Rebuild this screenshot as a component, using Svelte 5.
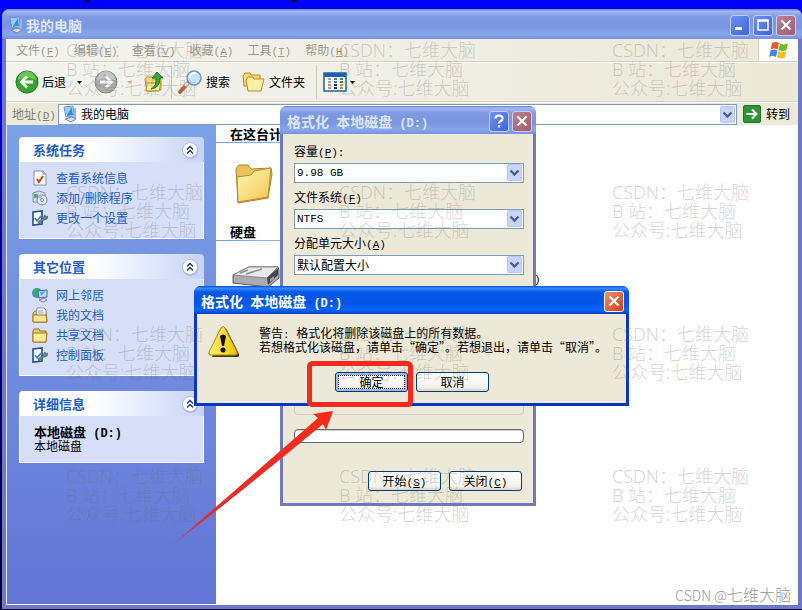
<script lang="ts">
	type Task = { icon: string; label: string };

	const menus = [
		['文件', 'F'],
		['编辑', 'E'],
		['查看', 'V'],
		['收藏', 'A'],
		['工具', 'T'],
		['帮助', 'H']
	];

	const panels: { title: string; tasks: Task[] }[] = [
		{
			title: '系统任务',
			tasks: [
				{ icon: 'check', label: '查看系统信息' },
				{ icon: 'programs', label: '添加/删除程序' },
				{ icon: 'settings', label: '更改一个设置' }
			]
		},
		{
			title: '其它位置',
			tasks: [
				{ icon: 'network', label: '网上邻居' },
				{ icon: 'documents', label: '我的文档' },
				{ icon: 'shared', label: '共享文档' },
				{ icon: 'settings', label: '控制面板' }
			]
		}
	];

	const fields = [
		{ id: 'capacity', label: '容量', key: 'P', colon: ':', value: '9.98 GB', latin: true },
		{ id: 'filesystem', label: '文件系统', key: 'F', colon: '', value: 'NTFS', latin: true },
		{ id: 'cluster', label: '分配单元大小', key: 'A', colon: '', value: '默认配置大小', latin: false }
	];

	const marks = Array.from({ length: 12 }, (_, i) => i);

	let address = $state('我的电脑');
</script>

{#snippet key(letter: string, after = '')}<span class="key">(<u>{letter}</u>){after}</span>{/snippet}

{#snippet computer()}
	<svg width="14" height="18" viewBox="0 0 14 18" aria-hidden="true">
		<path d="M1 2l9-1 1 10-8 1z" fill="#dfe9f7" stroke="#6f8fc0" />
		<path d="M2 3l7-1 1 8-6 1z" fill="#2d8fe8" />
		<path d="M2 3l7-1-5 8z" fill="#8fd4ff" />
		<path d="M11 3h2v11l-3 2z" fill="#9bb4da" />
		<path d="M2 14l7-2 4 2-5 3z" fill="#d5dbe8" stroke="#7a88a8" />
	</svg>
{/snippet}

{#snippet caret()}
	<svg class="caret" width="5" height="3" viewBox="0 0 5 3" aria-hidden="true"><path d="M0 0h5L2.500 3z" fill="currentColor" /></svg>
{/snippet}

{#snippet separator()}
	<span class="separator"></span>
{/snippet}

{#snippet closeGlyph()}
	<svg width="12" height="12" viewBox="0 0 12 12" aria-hidden="true"><path d="M1.500 1.500l9 9M10.500 1.500l-9 9" stroke="#fff" stroke-width="2.200" /></svg>
{/snippet}

{#snippet dropArrow()}
	<svg class="drop" width="15" height="17" viewBox="0 0 15 17" aria-hidden="true">
		<rect x=".5" y=".5" width="14" height="16" rx="1.500" fill="#c6d5fd" stroke="#b5c8f5" />
		<path d="M3.500 6.500l4 4 4-4" fill="none" stroke="#4d6185" stroke-width="2.400" />
	</svg>
{/snippet}

{#snippet folderIcon()}
	<path d="M1 5l2-3h5l1 2h9v11H2z" fill="#f7d774" stroke="#b98b23" />
	<path d="M4 9l2-3h5l1 2h10l-3 12H6z" fill="#ffefa3" stroke="#b98b23" />
{/snippet}

{#snippet taskIcon(name: string)}
	<svg width="16" height="16" viewBox="0 0 16 16" aria-hidden="true">
		{#if name === 'check'}
			<path d="M2 1h9l3 3v11H2z" fill="#fff" stroke="#7d8cae" />
			<path d="M11 1v3h3" fill="#cbd6ee" stroke="#7d8cae" />
			<path d="M5 9l2 3 4-6" fill="none" stroke="#d93b1a" stroke-width="2" />
		{:else if name === 'programs'}
			<path d="M1 3l6-2 6 2v9H1z" fill="#cfdcf2" stroke="#7f94bd" />
			<path d="M2 4h4v4H2z" fill="#58a95a" />
			<circle cx="10" cy="10" r="5" fill="#e4eaf5" stroke="#7387b0" />
			<path d="M10 10L6 7a5 5 0 0 1 4-2z" fill="#a3c1ee" />
			<circle cx="10" cy="10" r="1.500" fill="#fff" stroke="#7387b0" />
		{:else if name === 'settings'}
			<path d="M1 2l9-1v13l-9 1z" fill="#fff" stroke="#1d4f8f" stroke-width="1.600" />
			<path d="M3 8l2 3 4-5" fill="none" stroke="#2e78c8" stroke-width="1.600" />
			<path d="M6 12l5-4 2-3 1 2 2-1-1 3-3 1-5 4z" fill="#6c8195" stroke="#36485b" stroke-width=".6" />
		{:else if name === 'network'}
			<circle cx="5" cy="6" r="5" fill="#2e93d8" />
			<path d="M1 4l3-3 3 2-2 3-1 4-2-2z" fill="#38b34a" />
			<path d="M6 4l9-1v7l-8 1z" fill="#bfe0ff" stroke="#47699f" />
			<path d="M8 5l6-1-5 5z" fill="#54a7f0" />
			<path d="M7 13l5-2 3 2-4 2z" fill="#d5daf0" stroke="#66739b" stroke-width=".8" />
		{:else if name === 'documents'}
			<path d="M1 6l2-2h11l1 11H1z" fill="#f5cf63" stroke="#9b7424" />
			<path d="M5 1h7l2 2v8H4z" fill="#fff" stroke="#7b93bb" />
			<path d="M6 4h5M6 6h6" stroke="#76a3de" />
			<path d="M1 8h13l1 7H1z" fill="#ffe692" stroke="#9b7424" />
		{:else}
			<path d="M1 4l1-2h5l1 2h6v11H1z" fill="#f2ca5d" stroke="#9b7424" />
			<path d="M1 6h14l-1 9H1z" fill="#ffe99b" stroke="#9b7424" />
		{/if}
	</svg>
{/snippet}

{#snippet collapse(title: string)}
	<button class="collapse" aria-label={title}>
		<svg width="20" height="20" viewBox="0 0 20 20" aria-hidden="true">
			<circle cx="10.500" cy="11" r="8" fill="#8a9cc9" opacity=".5" />
			<circle cx="10" cy="10" r="7.500" fill="#fff" stroke="#b4bedb" />
			<path d="M7 9.500l3-3 3 3M7 13.500l3-3 3 3" fill="none" stroke="#1d3c70" stroke-width="1.500" />
		</svg>
	</button>
{/snippet}

<div class="desktop">
	<main class="window">
		<header class="titlebar">
			{@render computer()}
			<h1>我的电脑</h1>
			<button class="control" aria-label="最小化">
				<svg width="12" height="12" viewBox="0 0 12 12"><path d="M1 9.500h7" stroke="#fff" stroke-width="3" /></svg>
			</button>
			<button class="control" aria-label="最大化">
				<svg width="12" height="12" viewBox="0 0 12 12"><path d="M1 1h10v10H1zM1 2h10" fill="none" stroke="#fff" stroke-width="1.500" /></svg>
			</button>
			<button class="control close" aria-label="关闭">{@render closeGlyph()}</button>
		</header>

		<nav class="menubar">
			{#each menus as [label, letter]}
				<button>{label}{@render key(letter)}</button>
			{/each}
			<span class="flag">
				<svg width="22" height="19" viewBox="0 0 22 19" aria-hidden="true">
					<path d="M4 2q4-2 7 0L9.500 8.500q-4-2-7 0z" fill="#ea5b2b" />
					<path d="M12 2.500q4 2 8 0L18.500 9q-4 2-8 0z" fill="#75b52f" />
					<path d="M2.500 9.500q4-2 7 0L8 16q-4-2-7 0z" fill="#4a88dc" />
					<path d="M10.500 10q4 2 8 0L17 16.500q-4 2-8 0z" fill="#f5bd28" />
				</svg>
			</span>
		</nav>

		<div class="toolbar">
			<button class="tool">
				<svg width="24" height="24" viewBox="0 0 24 24" aria-hidden="true">
					<circle cx="12" cy="12" r="11" fill="#36a52b" stroke="#267b1f" />
					<path d="M3 10a9 9 0 0 1 18 0q-9-4-18 0z" fill="#8bdc72" opacity=".6" />
					<path d="M18 12H7M12 6.500L6.500 12l5.500 5.500" fill="none" stroke="#fff" stroke-width="2.800" />
				</svg>
				后退
				<span class="split">{@render caret()}</span>
			</button>
			<button class="tool forward" aria-label="前进">
				<svg width="24" height="24" viewBox="0 0 24 24" aria-hidden="true">
					<circle cx="12" cy="12" r="11" fill="#aaa" stroke="#8f8f8f" />
					<path d="M3 10a9 9 0 0 1 18 0q-9-4-18 0z" fill="#d8d8d8" opacity=".6" />
					<path d="M6 12h11M12 6.500l5.500 5.500-5.500 5.500" fill="none" stroke="#f4f4f4" stroke-width="2.800" />
				</svg>
				<span class="split">{@render caret()}</span>
			</button>
			<button class="tool" aria-label="向上">
				<svg width="22" height="22" viewBox="0 0 22 22" aria-hidden="true">
					<path d="M2 8l2-2h5l1 2h8v11L4 21z" fill="#f6d66d" stroke="#bb902d" />
					<path d="M4 12h14l-2 8H3z" fill="#ffefa5" stroke="#bb902d" />
					<path d="M8 18q6-3 5-11h-4l5-6 6 6h-3q0 10-9 11z" fill="#35ad32" stroke="#1c7a1d" />
				</svg>
			</button>
			{@render separator()}
			<button class="tool">
				<svg width="25" height="24" viewBox="0 0 25 24" aria-hidden="true">
					<path d="M10 13l-8 9" stroke="#b5683a" stroke-width="4" stroke-linecap="round" />
					<path d="M10 13l-3 3" stroke="#e0e4ea" stroke-width="3" />
					<circle cx="16" cy="8" r="7" fill="#c4e4fa" stroke="#7493bd" stroke-width="1.500" />
					<path d="M11.500 8a5 5 0 0 1 6-5" fill="none" stroke="#fff" stroke-width="2" />
				</svg>
				搜索
			</button>
			<button class="tool folders">
				<svg width="24" height="22" viewBox="0 0 24 22" aria-hidden="true">{@render folderIcon()}</svg>
				文件夹
			</button>
			{@render separator()}
			<button class="tool" aria-label="查看">
				<svg width="24" height="20" viewBox="0 0 24 20" aria-hidden="true">
					<rect x="1" y="1" width="22" height="18" fill="#fff" stroke="#1b63a8" stroke-width="1.500" />
					<path d="M1 3h22" stroke="#1b63a8" stroke-width="4" />
					<path d="M5 7h3M5 10h3" stroke="#a7a0aa" stroke-width="2" />
					<path d="M11 7h3M11 10h3" stroke="#3b78bd" stroke-width="2" />
					<path d="M17 7h3M17 10h3" stroke="#38884a" stroke-width="2" />
					<path d="M5 13h3M5 16h3" stroke="#d38a70" stroke-width="2" />
					<path d="M11 13h3M11 16h3" stroke="#1d3f78" stroke-width="2" />
					<path d="M17 13h3M17 16h3" stroke="#b39b3a" stroke-width="2" />
				</svg>
				{@render caret()}
			</button>
		</div>

		<div class="addressbar">
			<label for="address">地址{@render key('D')}</label>
			<div class="address">
				{@render computer()}
				<input id="address" bind:value={address} />
				{@render dropArrow()}
			</div>
			<button class="go">
				<svg width="18" height="18" viewBox="0 0 18 18" aria-hidden="true">
					<rect x=".5" y=".5" width="17" height="17" rx="1.500" fill="#2f9436" stroke="#1f6e28" />
					<path d="M3 9h10M9 4.500L13.500 9 9 13.500" fill="none" stroke="#fff" stroke-width="2" />
				</svg>
				转到
			</button>
		</div>

		<div class="content">
			<aside class="sidebar">
				{#each panels as panel}
					<section class="panel">
						<header><h2>{panel.title}</h2>{@render collapse(panel.title)}</header>
						<ul>
							{#each panel.tasks as task}
								<li><a href="#{task.icon}">{@render taskIcon(task.icon)}{task.label}</a></li>
							{/each}
						</ul>
					</section>
				{/each}
				<section class="panel">
					<header><h2>详细信息</h2>{@render collapse('详细信息')}</header>
					<div class="details">
						<strong>本地磁盘<span class="key">&nbsp;(D:)</span></strong>
						<span>本地磁盘</span>
					</div>
				</section>
			</aside>

			<div class="files">
				<h3>在这台计</h3>
				<div class="group">
					<svg width="40" height="42" viewBox="0 0 40 42" aria-hidden="true">
						<defs>
							<linearGradient id="folder" x1="0" y1="0" x2="1" y2="1">
								<stop offset="0" stop-color="#fff6b5" />
								<stop offset="1" stop-color="#f0c64f" />
							</linearGradient>
						</defs>
						<path d="M2 6l3-4h9l3 4 20-1 1 6-4 24-30 5z" fill="#e9c35a" stroke="#a98230" />
						<path d="M3 14l14-2 3-4 17-3-3 29-30 5z" fill="url(#folder)" stroke="#b58c2e" />
					</svg>
				</div>
				<h3>硬盘</h3>
				<div class="group drives">
					<svg width="48" height="30" viewBox="0 0 48 30" aria-hidden="true">
						<path d="M1 10L17 2h29l1 3v8L36 22 1 18z" fill="#a9abb0" stroke="#55585e" />
						<path d="M1 10L17 2h29L35 13z" fill="#e9eaec" stroke="#85878c" />
						<path d="M8 8l8-3M14 9l16-5" stroke="#8c8f96" stroke-width="1.500" />
						<path d="M35 13l11-10v7L36 20z" fill="#44474d" />
						<path d="M38 14l4-3v3l-4 3z" fill="#9aa0c0" />
					</svg>
					<span class="key">)</span>
				</div>
			</div>
		</div>
	</main>

	<section class="dialog format">
		<header class="titlebar">
			<h1>格式化<span class="key">&nbsp;</span>本地磁盘<span class="key">&nbsp;(D:)</span></h1>
			<button class="control" aria-label="帮助">
				<svg width="12" height="14" viewBox="0 0 12 14"><path d="M2.500 4.500q0-3 3.500-3t3.500 2.800q0 2-2 3-1.500.9-1.500 2.200M6 11v2.500" fill="none" stroke="#fff" stroke-width="2.200" /></svg>
			</button>
			<button class="control close" aria-label="关闭">{@render closeGlyph()}</button>
		</header>
		<form>
			{#each fields as field}
				<label for={field.id}>{field.label}{@render key(field.key, field.colon)}</label>
				<div class="combo">
					<select id={field.id} class:latin={field.latin}>
						<option>{field.value}</option>
					</select>
					{@render dropArrow()}
				</div>
			{/each}
			<fieldset></fieldset>
			<div class="progress" role="progressbar" aria-valuenow="0"></div>
			<div class="actions">
				<button type="button" class="push">开始{@render key('S')}</button>
				<button type="button" class="push">关闭{@render key('C')}</button>
			</div>
		</form>
	</section>

	<section class="dialog alert" role="alertdialog" aria-labelledby="alert-title">
		<header class="titlebar">
			<h1 id="alert-title">格式化<span class="key">&nbsp;</span>本地磁盘<span class="key">&nbsp;(D:)</span></h1>
			<button class="control close" aria-label="关闭">{@render closeGlyph()}</button>
		</header>
		<div class="message">
			<svg width="32" height="34" viewBox="0 0 32 34" aria-hidden="true">
				<defs>
					<linearGradient id="warn" x1="0" y1="0" x2="1" y2="0">
						<stop offset="0" stop-color="#fff06a" />
						<stop offset="1" stop-color="#f2c300" />
					</linearGradient>
				</defs>
				<path d="M17 3q1 0 2 2l12 24q1 3-2 3H4z" fill="#3f3c2c" />
				<path d="M13 3q2-3 4 0l12 24q1 3-2 3H3q-3 0-2-3z" fill="url(#warn)" stroke="#a58a12" />
				<path d="M12 11q3-3 6 0l-2 10h-2z" fill="#111" />
				<circle cx="15" cy="25" r="2.500" fill="#111" />
			</svg>
			<p>
				警告<span class="key">:&nbsp;</span>格式化将删除该磁盘上的所有数据。<br />
				若想格式化该磁盘，请单击“确定”。若想退出，请单击“取消”。
			</p>
		</div>
		<div class="actions">
			<button class="push default">确定</button>
			<button class="push">取消</button>
		</div>
	</section>

	<!-- highlight box and pointer over the confirm button -->
	<svg class="callout" width="250" height="194" viewBox="0 0 250 194" aria-hidden="true">
		<defs>
			<linearGradient id="tail" x1="0" y1="1" x2="1" y2="0">
				<stop offset="0" stop-color="#c8324a" stop-opacity=".3" />
				<stop offset=".2" stop-color="#e12b2b" />
				<stop offset="1" stop-color="#ff2a1a" />
			</linearGradient>
		</defs>
		<rect x="144.500" y="8.500" width="101" height="41" rx="3" fill="none" stroke="#f8291c" stroke-width="5" />
		<path d="M5 192L153 63l-5-4 20-3-7 19-3-6Q80 134 5 192z" fill="url(#tail)" />
	</svg>

	<svg class="specks" width="220" height="2" viewBox="0 0 220 2" aria-hidden="true">
		<path d="M2 0h5l-2 2h-2zM208 0h7l-2 2h-3z" fill="#000" />
	</svg>

	<div class="marks" aria-hidden="true">
		{#each marks as mark (mark)}
			<p>CSDN：七维大脑<br />B 站：七维大脑<br />公众号:七维大脑</p>
		{/each}
	</div>
	<p class="credit"><span>CSDN @</span>七维大脑</p>
</div>

<style>
	:global(body) {
		margin: 0;
		overflow: hidden;
	}

	.desktop {
		position: relative;
		display: flex;
		box-sizing: border-box;
		min-height: 100vh;
		padding: 9px 0 1px 2px;
		overflow: hidden;
		background: linear-gradient(#00f 0, #00f 40px, #0000a0 200px, #000030 100%);
		color: #000;
		font: 12px/18px 'Noto Sans CJK SC', sans-serif;
	}

	h1,
	h2,
	h3,
	p,
	ul {
		margin: 0;
		padding: 0;
	}

	svg {
		display: block;
		flex: none;
	}

	button,
	input,
	select {
		margin: 0;
		padding: 0;
		border: 0;
		background: none;
		color: inherit;
		font: inherit;
	}

	.key {
		font-family: 'Liberation Mono', monospace;
		font-size: 11px;
		line-height: 1;
	}

	.window {
		display: flex;
		flex: 1;
		flex-direction: column;
		min-width: 0;
		border-radius: 8px 8px 0 0;
		background: #7079c9;
	}

	.titlebar {
		display: flex;
		align-items: center;
		gap: 3px;
		box-sizing: border-box;
		height: 30px;
		padding: 2px 6px 0 7px;
		border-radius: 7px 7px 0 0;
		background: linear-gradient(#7186d8, #a2b7f2 8%, #7f9ae2 25%, #7b96e0 60%, #86a6ea 85%, #7790dc);
		color: #dbe5fb;
	}

	.titlebar h1 {
		flex: 1;
		font-size: 14px;
		font-weight: 700;
		line-height: 20px;
	}

	.titlebar h1 .key {
		font-size: 12px;
	}

	.control {
		display: grid;
		place-items: center;
		box-sizing: border-box;
		width: 20px;
		height: 21px;
		border: 1px solid #c2cff5;
		border-radius: 3px;
		background: linear-gradient(135deg, #6f8ff0, #3e66dc);
	}

	.control.close {
		background: linear-gradient(135deg, #bd8093, #a5596c);
	}

	.menubar {
		display: flex;
		height: 22px;
		margin: 0 4px;
		padding-left: 3px;
		border-bottom: 1px solid #d3d0c2;
		background: linear-gradient(90deg, #f3f3ef, #ece9d8);
	}

	.menubar button {
		padding: 0 7px;
		color: #9c9a8c;
	}

	.flag {
		display: grid;
		place-items: center;
		width: 39px;
		margin-left: auto;
		border-left: 1px solid #d3d0c2;
		background: #fff;
	}

	.toolbar {
		display: flex;
		align-items: center;
		gap: 6px;
		height: 38px;
		margin: 0 4px;
		padding-left: 9px;
		border-top: 1px solid #fff;
		border-bottom: 1px solid #d3d0c2;
		background: linear-gradient(90deg, #f3f3ef, #ece9d8);
	}

	.tool {
		display: flex;
		align-items: center;
		gap: 3px;
	}

	.split {
		padding: 0 6px 0 8px;
	}

	.forward .split {
		padding: 0 5px 0 6px;
		color: #b5b3a8;
	}

	.folders {
		padding: 0 5px 0 6px;
	}

	.separator {
		width: 1px;
		height: 34px;
		background: #cbc8b8;
	}

	.addressbar {
		display: flex;
		align-items: center;
		height: 22px;
		margin: 0 4px;
		padding: 0 8px 0 6px;
		border-top: 1px solid #fff;
		background: #ece9d8;
	}

	.addressbar label {
		width: 46px;
		color: #817f72;
	}

	.address {
		display: flex;
		flex: 1;
		align-items: center;
		gap: 4px;
		box-sizing: border-box;
		height: 21px;
		padding: 0 1px 0 4px;
		border: 1px solid #7f9db9;
		background: #fff;
	}

	.address input {
		flex: 1;
		min-width: 0;
	}

	.go {
		display: flex;
		align-items: center;
		gap: 5px;
		padding-left: 6px;
	}

	.content {
		display: flex;
		flex: 1;
		margin: 0 4px 4px;
		border-left: 1px solid #e8edfb;
		background: #fff;
	}

	.sidebar {
		display: flex;
		flex: none;
		flex-direction: column;
		gap: 15px;
		box-sizing: border-box;
		width: 209px;
		padding: 12px;
		border-bottom: 1px solid #fff;
		background: linear-gradient(#7ba2e7, #6375d6);
	}

	.panel header {
		display: flex;
		align-items: center;
		justify-content: space-between;
		height: 25px;
		padding: 0 4px 0 14px;
		border-radius: 4px 4px 0 0;
		background: linear-gradient(90deg, #fff 40%, #c6d3f7);
		color: #215dc6;
	}

	.panel h2 {
		font-size: 13px;
		font-weight: 700;
	}

	.panel ul,
	.details {
		border: 1px solid #fff;
		border-top: 0;
		background: #d6dff7;
	}

	.panel ul {
		padding: 6px 12px 10px;
		list-style: none;
	}

	.panel a {
		display: flex;
		align-items: center;
		gap: 8px;
		height: 20px;
		color: #215dc6;
		text-decoration: none;
	}

	.details {
		display: flex;
		flex-direction: column;
		padding: 10px 14px;
		line-height: 12px;
	}

	.details strong {
		font-size: 13px;
	}

	.details strong .key {
		font-size: 12px;
	}

	.files {
		flex: 1;
		min-width: 0;
	}

	.files h3 {
		padding-left: 14px;
		background: linear-gradient(90deg, #70a0e8, #fff) left bottom / 320px 1px no-repeat;
		font-size: 13px;
		font-weight: 700;
		line-height: 18px;
	}

	.group {
		display: flex;
		height: 60px;
		padding: 20px 0 0 18px;
	}

	.drives {
		padding: 24px 0 0 16px;
	}

	.drives .key {
		margin: 10px 0 0 254px;
	}

	.dialog {
		position: absolute;
		display: flex;
		flex-direction: column;
		box-sizing: border-box;
		border-radius: 7px 7px 0 0;
	}

	.dialog .titlebar {
		flex: none;
		height: 28px;
	}

	.dialog > :not(.titlebar) {
		background: #ece9d8;
	}

	.format {
		top: 106px;
		left: 280px;
		width: 256px;
		height: 400px;
		background: #7079c0;
	}

	.format .titlebar {
		padding-right: 4px;
	}

	.format form {
		display: flex;
		flex: 1;
		flex-direction: column;
		margin: 0 3px 3px;
		padding: 8px 9px 12px 11px;
	}

	.format label {
		height: 21px;
	}

	.combo {
		position: relative;
		display: flex;
		box-sizing: border-box;
		height: 20px;
		margin-bottom: 5px;
		border: 1px solid #7f9db9;
		background: #fff;
	}

	.combo select {
		flex: 1;
		padding-left: 2px;
		appearance: none;
	}

	.combo .latin {
		font-family: 'Liberation Mono', monospace;
		font-size: 11px;
	}

	.combo .drop {
		position: absolute;
		top: 0;
		right: 1px;
		pointer-events: none;
	}

	fieldset {
		flex: 1;
		margin: 14px 0;
		padding: 0;
		border: 1px solid #d0d0bf;
		border-radius: 4px;
	}

	.progress {
		box-sizing: border-box;
		height: 14px;
		border: 1px solid #686868;
		border-radius: 4px;
		background: #fff;
		box-shadow: inset 0 1px 1px #ccc;
	}

	.actions {
		display: flex;
		gap: 8px;
	}

	.format .actions {
		justify-content: flex-end;
		margin-top: 28px;
		padding-right: 2px;
	}

	.push {
		box-sizing: border-box;
		width: 73px;
		height: 20px;
		border: 1px solid #003c74;
		border-radius: 3px;
		background: linear-gradient(#fff, #f3f2ee 80%, #d8d3c6);
	}

	.push.default {
		outline: 1px dotted #223;
		outline-offset: -4px;
		box-shadow: inset 0 0 0 2px #9db8ea;
	}

	.alert {
		top: 286px;
		left: 194px;
		width: 435px;
		background: #0a37c4;
	}

	.alert .titlebar {
		padding-right: 5px;
		background: linear-gradient(#0a4bd0, #3a8bff 8%, #0458e8 22%, #0355e6 60%, #0766fb 85%, #0342c4);
		color: #fff;
	}

	.alert .control.close {
		border-color: #fff;
		background: linear-gradient(135deg, #ee9070, #d03c16);
	}

	.message {
		display: flex;
		gap: 19px;
		margin: 0 3px;
		padding: 11px 0 0 11px;
	}

	.message p {
		padding-top: 2px;
		line-height: 12px;
		white-space: nowrap;
	}

	.alert .actions {
		margin: 0 3px 3px;
		padding: 13px 0 11px 138px;
	}

	.callout {
		position: absolute;
		top: 355px;
		left: 165px;
		pointer-events: none;
	}

	.specks {
		position: absolute;
		top: 0;
		left: 82px;
	}

	.marks {
		position: absolute;
		top: 41px;
		left: 66px;
		display: grid;
		grid-template-columns: repeat(3, 273px);
		row-gap: 85px;
		color: rgba(110, 110, 110, 0.3);
		font-family: 'Noto Sans', 'Noto Sans CJK SC', sans-serif;
		font-size: 18px;
		font-weight: 300;
		line-height: 19px;
		pointer-events: none;
	}

	.credit {
		position: absolute;
		right: 11px;
		bottom: 5px;
		color: #999;
		font-size: 16px;
		font-weight: 300;
		line-height: 20px;
	}

	.credit span {
		font-size: 14px;
	}

	.collapse {
		display: grid;
		place-items: center;
	}
</style>
